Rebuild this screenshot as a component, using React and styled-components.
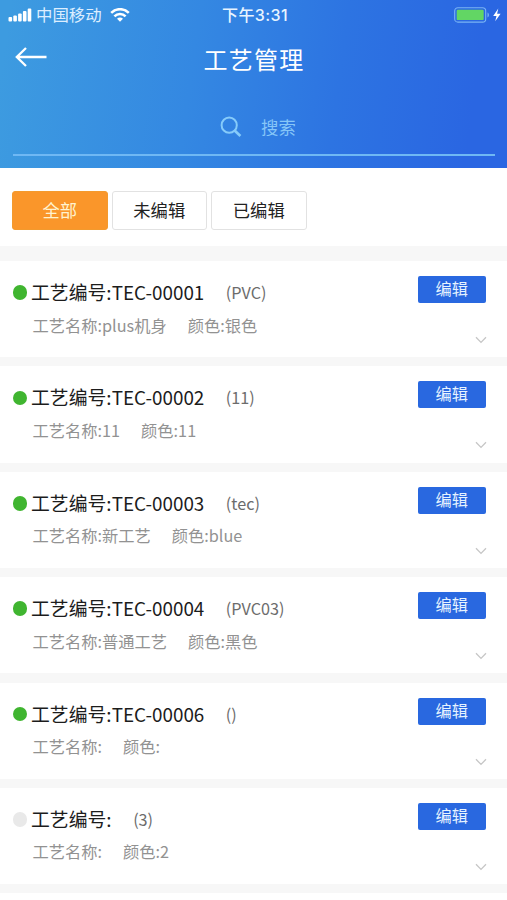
import React from "react";
import styled, { createGlobalStyle } from "styled-components";

const items = [
  { id: 1, code: "TEC-00001", type: "PVC", name: "plus机身", color: "银色", active: true },
  { id: 2, code: "TEC-00002", type: "11", name: "11", color: "11", active: true },
  { id: 3, code: "TEC-00003", type: "tec", name: "新工艺", color: "blue", active: true },
  { id: 4, code: "TEC-00004", type: "PVC03", name: "普通工艺", color: "黑色", active: true },
  { id: 5, code: "TEC-00006", type: "", name: "", color: "", active: true },
  { id: 6, code: "", type: "3", name: "", color: "2", active: false },
];

const tabs = ["全部", "未编辑", "已编辑"];

const StatusBar = () => (
  <Status>
    <Carrier>
      <svg width="24" height="14" viewBox="0 0 24 14" fill="#fff">
        <rect x="0.5" y="9" width="3.6" height="4.5" rx="1" />
        <rect x="5.3" y="7.6" width="3.6" height="5.9" rx="1" />
        <rect x="10.1" y="5.6" width="3.6" height="7.9" rx="1" />
        <rect x="14.9" y="3" width="3.6" height="10.5" rx="1" />
        <rect x="19.7" y="0.5" width="3.6" height="13" rx="1" />
      </svg>
      <CarrierName>中国移动</CarrierName>
      <svg width="20" height="14" viewBox="0 0 20 14" fill="none" stroke="#fff" strokeWidth="2.5">
        <path d="M1.2 4.9C6 -0.1 14 -0.1 18.8 4.9" />
        <path d="M4.4 8.4C7.5 5.1 12.5 5.1 15.6 8.4" />
        <path d="M7 10.7C8.7 9 11.3 9 13 10.7L10 13.8Z" fill="#fff" stroke="none" />
      </svg>
    </Carrier>
    <Time>下午3:31</Time>
    <Power>
      <svg width="48" height="16" viewBox="0 0 48 16">
        <rect x="0.7" y="0.7" width="31" height="14.4" rx="3.2" fill="none" stroke="#79b4f4" strokeWidth="1.1" />
        <rect x="2.7" y="2.7" width="27" height="10.4" rx="1.2" fill="#62d664" />
        <path d="M33.5 5.4C35.4 6 35.4 9.7 33.5 10.4Z" fill="#79b4f4" />
        <path d="M44.3 1.6L39.2 8.9H42.5L41.2 14.2L46.6 6.8H43.1Z" fill="#fff" />
      </svg>
    </Power>
  </Status>
);

const ProcessCard = ({ code, type, name, color, active }) => (
  <Card>
    <Info>
      <TitleRow>
        <Dot $active={active} />
        <Title>工艺编号:{code}</Title>
        <Type>({type})</Type>
      </TitleRow>
      <Details>
        <span>工艺名称:{name}</span>
        <span>颜色:{color}</span>
      </Details>
    </Info>
    <Actions>
      <EditButton>编辑</EditButton>
      <Chevron width="12" height="8" viewBox="0 0 12 8">
        <path d="M1 1.2L6 6.4L11 1.2" fill="none" stroke="#c6c6c6" strokeWidth="1.3" />
      </Chevron>
    </Actions>
  </Card>
);

export default function App() {
  return (
    <Page>
      <GlobalStyle />
      <Header>
        <StatusBar />
        <NavBar>
          <BackButton aria-label="返回">
            <svg width="32" height="20" viewBox="0 0 32 20" fill="none" stroke="#fff" strokeWidth="2.3">
              <path d="M31.5 10H1.8M11 1L1.8 10L11 19" />
            </svg>
          </BackButton>
          <PageTitle>工艺管理</PageTitle>
        </NavBar>
        <Search>
          <svg width="22" height="24" viewBox="0 0 22 24" fill="none" stroke="#86cbfa">
            <circle cx="9.2" cy="11.2" r="7.6" strokeWidth="2" />
            <path d="M14.6 16.6L20.4 22" strokeWidth="2.7" />
          </svg>
          <span>搜索</span>
        </Search>
      </Header>
      <Tabs>
        {tabs.map((tab, i) => (
          <Tab key={tab} $selected={i === 0}>
            {tab}
          </Tab>
        ))}
      </Tabs>
      <List>
        {items.map((item) => (
          <ProcessCard key={item.id} {...item} />
        ))}
        <Card />
      </List>
    </Page>
  );
}

const GlobalStyle = createGlobalStyle`
  * {
    box-sizing: border-box;
  }
  body {
    margin: 0;
    font-family: "Noto Sans CJK SC", sans-serif;
  }
  button {
    font-family: inherit;
    padding: 0;
    border: none;
    background: none;
  }
  svg {
    display: block;
    flex-shrink: 0;
  }
`;

const Page = styled.div`
  width: 507px;
  height: 900px;
  overflow: hidden;
  background: #f7f7f7;
`;

const Header = styled.header`
  height: 168px;
  padding: 0 12px 0 13px;
  background: linear-gradient(98deg, #3d9be0 2%, #3488e2 38%, #2d74e2 66%, #2a66e2 92%);
`;

const Status = styled.div`
  display: grid;
  grid-template-columns: 1fr auto 1fr;
  align-items: center;
  height: 29px;
  margin: 0 -7px 0 -5px;
  color: #fff;
`;

const Carrier = styled.div`
  display: flex;
  align-items: center;
`;

const CarrierName = styled.span`
  margin: 0 8px 0 4px;
  padding-bottom: 2px;
  font-size: 16.4px;
  line-height: 26px;
  color: #dceeff;
`;

const Time = styled.span`
  font-family: Inter, "Noto Sans CJK SC", sans-serif;
  font-size: 16px;
  font-weight: 500;
  line-height: 28px;
  letter-spacing: 0.4px;
  color: #e8f4ff;
`;

const Power = styled.div`
  display: flex;
  justify-content: flex-end;
`;

const NavBar = styled.div`
  display: grid;
  grid-template-columns: 1fr auto 1fr;
  height: 61px;
`;

const BackButton = styled.button`
  justify-self: start;
  align-self: start;
  margin: 18px 0 0 2px;
`;

const PageTitle = styled.h1`
  margin: 12px 0 0;
  font-size: 24px;
  font-weight: 400;
  line-height: 36px;
  letter-spacing: 1.3px;
  color: #fff;
`;

const Search = styled.div`
  display: flex;
  align-items: center;
  gap: 19px;
  height: 66px;
  padding: 8px 0 0 207px;
  border-bottom: 2px solid #6fb8f4;
  font-size: 17.4px;
  color: #86c6f8;
`;

const Tabs = styled.div`
  display: flex;
  gap: 4px;
  height: 78px;
  padding: 23px 12px 0;
  background: #fff;
`;

const Tab = styled.button`
  width: 95.5px;
  height: 39px;
  padding-bottom: 2px;
  border: 1px solid ${({ $selected }) => ($selected ? "#f39a2e" : "#e2e2e2")};
  border-radius: 3px;
  background: ${({ $selected }) => ($selected ? "#fa962a" : "#fff")};
  color: ${({ $selected }) => ($selected ? "#fff3cf" : "#222")};
  font-size: 17.3px;
`;

const List = styled.div`
  display: flex;
  flex-direction: column;
  gap: 9.2px;
  padding-top: 15px;
`;

const Card = styled.div`
  display: flex;
  flex-shrink: 0;
  justify-content: space-between;
  height: 96.2px;
  padding: 15px 21.5px 0 12.5px;
  background: #fff;
`;

const Info = styled.div`
  padding-top: 2px;
`;

const TitleRow = styled.div`
  display: flex;
  align-items: center;
  height: 29px;
`;

const Dot = styled.i`
  width: 14.5px;
  height: 14.5px;
  margin-right: 4px;
  border-radius: 50%;
  background: ${({ $active }) => ($active ? "#40b530" : "#e9e9e9")};
`;

const Title = styled.span`
  padding-bottom: 2px;
  font-size: 18.85px;
  color: #1c1c1c;
`;

const Type = styled.span`
  margin-left: 21.5px;
  padding-bottom: 1px;
  font-size: 16.2px;
  color: #6c6c6c;
`;

const Details = styled.div`
  display: flex;
  gap: 21px;
  padding: 4.6px 0 0 20px;
  font-size: 16.25px;
  line-height: 26px;
  color: #929292;
`;

const Actions = styled.div`
  display: flex;
  flex-direction: column;
  align-items: flex-end;
`;

const EditButton = styled.button`
  width: 67.5px;
  height: 27px;
  padding-bottom: 2px;
  border-radius: 2px;
  background: #2968e0;
  color: #e6f3ff;
  font-size: 16.2px;
  line-height: 25px;
`;

const Chevron = styled.svg`
  margin-top: 33px;
  margin-right: -1px;
`;
